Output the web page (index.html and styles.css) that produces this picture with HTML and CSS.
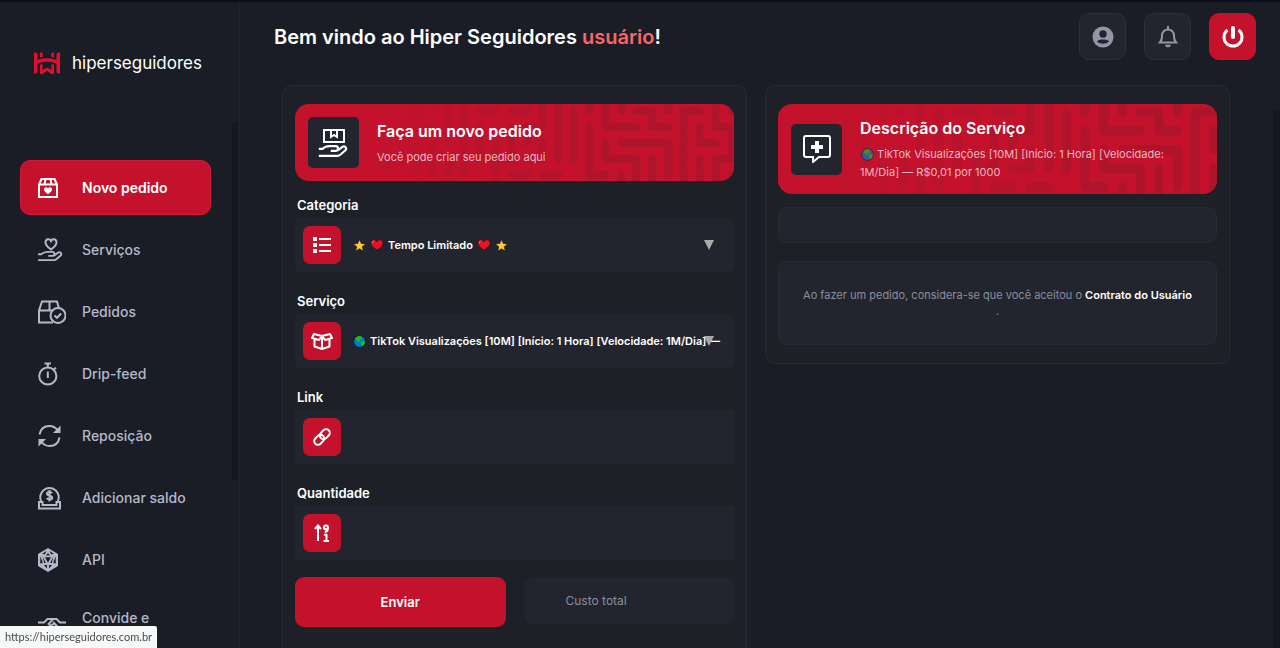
FILE: index.html
```
<!DOCTYPE html>
<html lang="pt-BR">
<head>
  <meta charset="UTF-8" />
  <meta name="viewport" content="width=device-width, initial-scale=1.0"/>
  <title>Hiper Seguidores - Novo pedido</title>
  <link rel="stylesheet" href="styles.css">
</head>
<body>
  <!-- shared shapes -->
  <svg class="defs" width="0" height="0" aria-hidden="true">
    <defs>
      <linearGradient id="fade" gradientUnits="userSpaceOnUse" x1="40" y1="0" x2="320" y2="0">
        <stop offset="0" stop-color="#a9152c" stop-opacity="0"/>
        <stop offset="1" stop-color="#a9152c" stop-opacity="0.85"/>
      </linearGradient>
      <symbol id="maze" viewBox="0 0 440 77" preserveAspectRatio="xMidYMid slice">
        <g fill="none" stroke="url(#fade)" stroke-width="8" stroke-linecap="round" stroke-linejoin="round">
          <path d="M91 7V71M107 23V55M122 -6V23H138M122 39V82M138 7V7.1M138 39V71M154 -6V39M154 55V82M170 7V71M185 7H201M185 23V55M201 39V82M217 7H233M217 23V55H201M233 39V23M217 71H233"/>
          <path d="M248 -6V23H233M248 39V55H233M248 71H264M264 -6V55M279 7V55M295 -6V7M295 23V71H311M295 71V71.1M311 -6V23H342M327 -6V7M342 7H358V23H374M374 -6V7M311 39V55H342V82M327 39H374V71M327 71V82M358 55V82"/>
          <path d="M389 82V7H405M405 23V39H421M405 55V82M421 -6V23H437V55M437 7V-6M452 7H437M437 39V55H421V82M452 71H437V82"/>
        </g>
      </symbol>
      <symbol id="star" viewBox="0 0 12 12">
        <path d="M6 .5l1.600 3.700 4 .3-3.100 2.700 1 3.900L6 9l-3.500 2.100 1-3.900L.4 4.500l4-.3z" fill="#ffc83d" stroke="#14151a" stroke-width=".5"/>
      </symbol>
      <symbol id="heart" viewBox="0 0 14 12">
        <path d="M7 11.300C3 8.300.8 6.300.8 3.900.8 2.100 2.100.8 3.800.8 5.100.8 6.300 1.500 7 2.700 7.700 1.500 8.900.8 10.200.8c1.700 0 3 1.300 3 3.100 0 2.400-2.200 4.400-6.200 7.400z" fill="#e81224" stroke="#14151a" stroke-width=".7"/>
        <path d="M2.200 3.800c.1-.9.700-1.500 1.500-1.600" fill="none" stroke="#f98c95" stroke-width=".9"/>
      </symbol>
      <symbol id="globe" viewBox="0 0 13 13">
        <circle cx="6.500" cy="6.500" r="5.900" fill="#0078d7" stroke="#14151a" stroke-width=".8"/>
        <path d="M2.500 3.200C4 1.600 5.600 1 7.600 1.300l1.400 1.300-1 1 .7 1.200-1.700.7-.7 1.400-1.800-.4L3.200 5zM7.600 7l2.400-1.200 1.900 1.500c-.2 1.700-1.200 3.100-2.500 4L8 9.500z" fill="#16c60c"/>
      </symbol>
      <symbol id="hand" viewBox="0 0 28 12">
        <path d="M0 3.500h3.500C5.500 1.500 7.500 1 10 1h5.500a2.200 2.200 0 0 1 0 4.400H11M17.500 5l4.300-3.300a2.100 2.100 0 0 1 2.700 3.200L19.800 9c-.8.700-1.600 1-2.600 1H0" fill="none" stroke="currentColor" stroke-width="2"/>
      </symbol>
    </defs>
  </svg>

  <div class="layout">
    <aside class="sidebar">
      <a class="logo" href="#">
        <svg width="26" height="22" viewBox="0 0 26 22" fill="#e00f31">
          <path d="M0 0l3.500 1.500v6.300C9.500 5.700 16.500 5.700 22.500 7.800V1.500L26 0v22l-3.500-1.500V11.800C16.500 9.200 9.500 9.200 3.500 11.800v8.700L0 22z"/>
          <path d="M6 0l2.800 1.500V4.800L6 5.400zM20 0l-2.800 1.500v3.300l2.800.6z"/>
          <path d="M6 12.800l2.600-.8v6l4.400-2.600 4.400 2.600v-6l2.600.8V22h-2.800L13 18.800 8.800 22H6z"/>
        </svg>
        <span>hiperseguidores</span>
      </a>
      <nav class="menu">
        <a class="menu-item active" href="#">
          <svg class="menu-icon" viewBox="0 0 28 24" fill="none" stroke="currentColor" stroke-width="2">
            <path d="M1 8.500V21h18V8.500L16.500 3h-13zM1 8.500h18M7.500 3L6.500 8.500M12.500 3l1 5.500"/>
            <path d="M10 18.200c-2.700-1.900-4-3.200-4-4.900 0-2.200 2.900-2.900 4-.9 1.100-2 4-1.300 4 .9 0 1.700-1.300 3-4 4.900z" fill="currentColor" stroke="none"/>
          </svg>
          <span>Novo pedido</span>
        </a>
        <a class="menu-item" href="#">
          <svg class="menu-icon" viewBox="0 0 28 24" fill="none" stroke="currentColor" stroke-width="2">
            <path d="M13 11.500C9 8.500 7.500 7 7.500 4.500 7.500 1 11.500 0 13 3c1.500-3 5.500-2 5.500 1.500 0 2.500-1.500 4-5.500 7z"/>
            <use href="#hand" x="0" y="13" width="26" height="11"/>
          </svg>
          <span>Serviços</span>
        </a>
        <a class="menu-item" href="#">
          <svg class="menu-icon" viewBox="0 0 28 24" fill="none" stroke="currentColor" stroke-width="2">
            <path d="M15 22.500H1v-12L4 1.500h15l2 7M1 10.500h13M11.500 1.500v9"/>
            <circle cx="20" cy="15.500" r="7.500"/>
            <path d="M16.500 15.500l2.500 2.300 4.200-4.300"/>
          </svg>
          <span>Pedidos</span>
        </a>
        <a class="menu-item" href="#">
          <svg class="menu-icon" viewBox="0 0 28 24" fill="none" stroke="currentColor" stroke-width="2">
            <circle cx="9.800" cy="14" r="8.600"/>
            <path d="M9.800 9.500V16M6.500 1.500H13M9.800 1.500V5M15.500 7.800L18 5.800" />
          </svg>
          <span>Drip-feed</span>
        </a>
        <a class="menu-item" href="#">
          <svg class="menu-icon" viewBox="0 0 28 24" fill="none" stroke="currentColor" stroke-width="2">
            <path d="M1.500 10.500C2.500 5 6.500 2 11.500 2c3.500 0 6 1.500 8 4M21.500 13.500c-1 5.500-5 8.500-10 8.500-3.500 0-6-1.500-8-4"/>
            <path d="M22.500 1.500V9H15zM.5 22.500V15H8z" fill="currentColor" stroke="none"/>
          </svg>
          <span>Reposição</span>
        </a>
        <a class="menu-item" href="#">
          <svg class="menu-icon" viewBox="0 0 28 24" fill="none" stroke="currentColor" stroke-width="2">
            <path d="M3.500 16A9.300 9.300 0 1 1 19.500 16M1 16h3.500v3h14v-3H22v6.500H1z"/>
            <path d="M14 7.300C13 5.500 9 5.600 9 7.800c0 2.500 5.200 1.300 5.200 3.900 0 2.200-4.200 2.300-5.400.3M11.500 4v11.500"/>
          </svg>
          <span>Adicionar saldo</span>
        </a>
        <a class="menu-item" href="#">
          <svg class="menu-icon" viewBox="0 0 28 24">
            <path d="M10 0l10 6v12l-10 6L0 18V6z" fill="currentColor"/>
            <path d="M8.500 3L4.200 5.700l2.600.8zM11.500 3l4.300 2.700-2.600.8zM10 5l-2 2.500h4zM2.300 8.300l2.500 6.500-2.500 1zM17.700 8.300l-2.500 6.500 2.500 1zM7 9.300h6l-3 5.500zM4.600 8.600l3.300 6.300-1.700.2zM15.400 8.600l-3.300 6.300 1.700.2zM6 17h3v3.500zM14 17h-3v3.500z" fill="#1a1d25"/>
          </svg>
          <span>API</span>
        </a>
        <a class="menu-item" href="#">
          <svg class="menu-icon" viewBox="0 0 28 24" fill="none" stroke="currentColor" stroke-width="2">
            <path d="M0 7.500h6L9.500 4h9L22 7.500h6M15 4.500l-4.500 4.500c1.500 2 4 1.500 5.500-1l6 6.500M0 17h5l6 4.500 3 .5 8-5h6"/>
          </svg>
          <span>Convide e ganhe</span>
        </a>
      </nav>
    </aside>

    <main class="content">
      <header class="topbar">
        <h1>Bem vindo ao Hiper Seguidores <span class="user">usuário</span>!</h1>
        <div class="actions">
          <button type="button" class="btn-icon" aria-label="Conta">
            <svg width="22" height="22" viewBox="0 0 22 22">
              <circle cx="11" cy="11" r="10.500" fill="#9396a8"/>
              <circle cx="11" cy="8" r="3.700" fill="#23252e"/>
              <path d="M5 15.500c1.500-2.600 10.500-2.600 12 0-2.800 3-9.200 3-12 0z" fill="#23252e"/>
            </svg>
          </button>
          <button type="button" class="btn-icon" aria-label="Notificações">
            <svg width="20" height="22" viewBox="0 0 20 22" fill="none" stroke="#9396a8" stroke-width="2">
              <path d="M10 0v3M2 16.500c1.500-1.500 2-3 2-7a6 6 0 0 1 12 0c0 4 .5 5.500 2 7zM1 16.500h18"/>
              <path d="M7 18.800h6c-.4 3.400-5.600 3.400-6 0z" fill="#9396a8" stroke="none"/>
            </svg>
          </button>
          <button type="button" class="btn-icon btn-power" aria-label="Sair">
            <svg width="22" height="22" viewBox="0 0 22 22" fill="none" stroke="#fff" stroke-width="3">
              <path d="M11 2v9" stroke-width="4" stroke-linecap="round"/>
              <path d="M5.500 4a9 9 0 1 0 11 0"/>
            </svg>
          </button>
        </div>
      </header>

      <div class="columns">
        <section class="card card-order">
          <div class="banner">
            <svg class="banner-maze" aria-hidden="true"><use href="#maze" width="100%" height="100%"/></svg>
            <div class="banner-icon">
              <svg width="32" height="30" viewBox="0 0 32 30" fill="none" stroke="#fff" stroke-width="2">
                <path d="M6 2h20v12H6zM13 2v7l3-2 3 2V2"/>
                <use href="#hand" x="0" y="17" width="32" height="13" color="#fff"/>
              </svg>
            </div>
            <div class="banner-text">
              <h2>Faça um novo pedido</h2>
              <p>Você pode criar seu pedido aqui</p>
            </div>
          </div>

          <form autocomplete="off">
            <div class="group">
              <label for="category">Categoria</label>
              <div class="field">
                <span class="field-icon">
                  <svg width="18" height="16" viewBox="0 0 18 16" fill="#fff">
                    <path d="M0 0h4v4H0zM0 6h4v4H0zM0 12h4v4H0zM6 1h12v2H6zM6 7h12v2H6zM6 13h12v2H6z"/>
                  </svg>
                </span>
                <svg width="13" height="13"><use href="#star"/></svg>
                <svg width="14" height="12"><use href="#heart"/></svg>
                <select id="category">
                  <option>Tempo Limitado</option>
                </select>
                <svg width="14" height="12"><use href="#heart"/></svg>
                <svg width="13" height="13"><use href="#star"/></svg>
                <svg class="arrow" width="10" height="10" viewBox="0 0 10 10"><path d="M0 0h10L5 10z" fill="#aaa"/></svg>
              </div>
            </div>
            <div class="group">
              <label for="service">Serviço</label>
              <div class="field">
                <span class="field-icon">
                  <svg width="22" height="18" viewBox="0 0 22 18" fill="none" stroke="#fff" stroke-width="2" stroke-linejoin="round">
                    <path d="M11 4L3 2 1 6l7 2 3-4 3 4 7-2-2-4zM3.500 7v7.500L11 17l7.500-2.500V7M11 4v13"/>
                  </svg>
                </span>
                <svg width="13" height="13"><use href="#globe"/></svg>
                <select id="service" class="grow">
                  <option>TikTok Visualizações [10M] [Início: 1 Hora] [Velocidade: 1M/Dia] — R$0,01 por 1000</option>
                </select>
                <svg class="arrow" width="10" height="10" viewBox="0 0 10 10"><path d="M0 0h10L5 10z" fill="#aaa"/></svg>
              </div>
            </div>
            <div class="group">
              <label for="link">Link</label>
              <div class="field square">
                <span class="field-icon">
                  <svg width="20" height="20" viewBox="0 0 20 20" fill="none" stroke="#fff" stroke-width="2">
                    <rect x="-5.500" y="-3.700" width="11" height="7.400" rx="3.700" transform="translate(12.800 7.200) rotate(-45)"/>
                    <rect x="-5.500" y="-3.700" width="11" height="7.400" rx="3.700" transform="translate(7.200 12.800) rotate(-45)"/>
                  </svg>
                </span>
                <input type="text" id="link">
              </div>
            </div>
            <div class="group">
              <label for="quantity">Quantidade</label>
              <div class="field square">
                <span class="field-icon">
                  <svg width="16" height="18" viewBox="0 0 16 18" fill="none" stroke="#fff" stroke-width="2">
                    <path d="M4 17V3M1 5l3-3.500L7 5"/>
                    <path d="M13.500 4v2.500L11 8.500M10 10.800h2.500V17M9.500 17H15"/>
                    <circle cx="12" cy="3.500" r="2"/>
                  </svg>
                </span>
                <input type="text" id="quantity">
              </div>
            </div>
            <div class="form-actions">
              <button type="submit" class="btn-send">Enviar</button>
              <input type="text" class="total" placeholder="Custo total" aria-label="Custo total" readonly>
            </div>
          </form>
        </section>

        <section class="card">
          <div class="banner">
            <svg class="banner-maze" aria-hidden="true"><use href="#maze" width="100%" height="100%"/></svg>
            <div class="banner-icon">
              <svg width="28" height="28" viewBox="0 0 28 28">
                <path d="M3 1h22a2 2 0 0 1 2 2v17a2 2 0 0 1-2 2h-9l-6 5v-5H3a2 2 0 0 1-2-2V3a2 2 0 0 1 2-2z" fill="none" stroke="#fff" stroke-width="2"/>
                <path d="M12 6h4v4h4v4h-4v4h-4v-4H8v-4h4z" fill="#fff"/>
              </svg>
            </div>
            <div class="banner-text">
              <h2>Descrição do Serviço</h2>
              <p><svg class="globe" width="13" height="13"><use href="#globe"/></svg> TikTok Visualizações [10M] [Início: 1 Hora] [Velocidade: 1M/Dia] — R$0,01 por 1000</p>
            </div>
          </div>
          <div class="box box-empty"></div>
          <div class="box box-terms">
            <p>Ao fazer um pedido, considera-se que você aceitou o <a href="#">Contrato do Usuário</a><br>.</p>
          </div>
        </section>
      </div>
    </main>
  </div>

  <div class="status-url">https://hiperseguidores.com.br</div>
</body>
</html>
```
FILE: styles.css
```
:root {
  --primary: #c4122d;
  --bg: #1a1d25;
  --card-bg: #1e2027;
  --field: #23252e;
  --border: #272a33;
  --text: #b4b9ca;
  --muted: #8a8e9b;
}
* {
  box-sizing: border-box;
}
body {
  margin: 0;
  background: var(--bg);
  color: #fff;
  font-family: Inter, "Liberation Sans", sans-serif;
  font-size: 12px;
  overflow: hidden;
}
h1, h2, p {
  margin: 0;
}
a {
  color: inherit;
  text-decoration: none;
}
button, input, select {
  font: inherit;
  color: inherit;
  border: none;
  outline: none;
  background: none;
}
svg {
  display: block;
  flex: none;
}
.defs {
  position: absolute;
}
.layout {
  display: flex;
  height: 100vh;
  border-top: 2px solid #0e0b1b;
}

/* sidebar */
.sidebar {
  position: relative;
  width: 240px;
  flex: none;
  overflow: hidden;
  border-right: 1px solid #20232c;
}
.sidebar::after {
  content: "";
  position: absolute;
  top: 120px;
  right: 1px;
  width: 6px;
  height: 358px;
  border-radius: 3px;
  background: #15171f;
}
.logo {
  display: flex;
  align-items: center;
  gap: 12px;
  margin: 49px 0 0 34px;
  height: 24px;
  font-size: 17px;
}
.menu {
  display: flex;
  flex-direction: column;
  gap: 7px;
  padding: 85px 28px 0 20px;
}
.menu-item {
  display: flex;
  align-items: center;
  gap: 16px;
  min-height: 55px;
  padding: 15px 18px;
  border-radius: 10px;
  font-size: 14px;
  line-height: 18px;
  font-weight: 500;
  color: var(--text);
}
.menu-item.active {
  background: var(--primary);
  border: 1px solid #d11a37;
  padding: 14px 17px;
  color: #fff;
  font-weight: 600;
}
.menu-icon {
  width: 28px;
  height: 24px;
}

/* content */
.content {
  flex: 1;
  min-width: 0;
  overflow-y: auto;
  scrollbar-width: none;
}
.content::after {
  content: "";
  position: absolute;
  top: 110px;
  right: 0;
  bottom: 0;
  width: 7px;
  border-radius: 4px 4px 0 0;
  background: #15171f;
}
.topbar {
  display: flex;
  justify-content: space-between;
  padding: 11px 24px 0 34px;
}
.topbar h1 {
  font-size: 20px;
  font-weight: 600;
  line-height: 48px;
}
.user {
  color: #ff6467;
}
.actions {
  display: flex;
  gap: 18px;
}
.btn-icon {
  display: flex;
  align-items: center;
  justify-content: center;
  width: 47px;
  height: 47px;
  padding: 0;
  border: 1px solid #2d303a;
  border-radius: 10px;
  background: var(--field);
  cursor: pointer;
}
.btn-power {
  background: var(--primary);
  border-color: var(--primary);
}
.columns {
  display: grid;
  grid-template-columns: 1fr 1fr;
  align-items: start;
  gap: 18px;
  padding: 24px 50px 0 42px;
}
.card {
  min-width: 0;
  padding: 18px 12px;
  border: 1px solid var(--border);
  border-radius: 10px;
  background: var(--card-bg);
}
.card-order {
  padding-bottom: 40px;
}

/* banner */
.banner {
  position: relative;
  display: flex;
  align-items: center;
  gap: 18px;
  padding: 13px;
  border-radius: 14px;
  background: var(--primary);
  overflow: hidden;
}
.banner-maze {
  position: absolute;
  top: 0;
  left: 0;
  width: 100%;
  height: 100%;
}
.banner-icon {
  position: relative;
  display: flex;
  align-items: center;
  justify-content: center;
  flex: none;
  width: 51px;
  height: 51px;
  border-radius: 5px;
  background: var(--field);
}
.banner-text {
  position: relative;
}
.banner-text h2 {
  font-size: 16px;
  font-weight: 600;
  line-height: 22px;
}
.banner-text p {
  margin-top: 6px;
  font-size: 11px;
  line-height: 18px;
  color: #f0b7c0;
}
.globe {
  display: inline-block;
  margin-left: 1px;
  vertical-align: -3px;
  opacity: .7;
}

/* form */
form {
  display: flex;
  flex-direction: column;
  gap: 17px;
  margin-top: 12px;
}
.group label {
  display: block;
  margin-left: 2px;
  font-size: 13px;
  font-weight: 600;
  line-height: 25px;
}
.field {
  position: relative;
  display: flex;
  align-items: center;
  gap: 4px;
  height: 54px;
  padding: 0 12px 0 8px;
  border-radius: 6px;
  background: var(--field);
}
.field.square {
  border-radius: 0;
}
.field-icon {
  display: flex;
  align-items: center;
  justify-content: center;
  flex: none;
  width: 38px;
  height: 38px;
  margin-right: 8px;
  border-radius: 7px;
  background: var(--primary);
}
.field select {
  appearance: none;
  min-width: 0;
  padding: 0;
  font-size: 11px;
  font-weight: 600;
  line-height: 20px;
}
.field input {
  flex: 1;
  min-width: 0;
  height: 100%;
}
.field .grow {
  flex: 1;
}
.arrow {
  position: absolute;
  right: 20px;
  top: 22px;
  pointer-events: none;
}
.form-actions {
  display: grid;
  grid-template-columns: 1fr 1fr;
  align-items: start;
  gap: 18px;
}
.btn-send {
  height: 50px;
  border-radius: 9px;
  background: var(--primary);
  font-size: 13px;
  font-weight: 600;
  cursor: pointer;
}
.total {
  min-width: 0;
  height: 47px;
  padding: 0 42px;
  border-radius: 9px;
  background: var(--field);
}
.total::placeholder {
  color: var(--muted);
}

/* service description */
.box {
  border: 1px solid var(--border);
  border-radius: 9px;
  background: var(--field);
}
.box-empty {
  height: 36px;
  margin-top: 13px;
}
.box-terms {
  margin-top: 18px;
  padding: 25px 18px;
  text-align: center;
  font-size: 11px;
  line-height: 16px;
  color: var(--muted);
}
.box-terms a {
  color: #fff;
  font-weight: 600;
}

.status-url {
  position: fixed;
  left: 0;
  bottom: 0;
  padding: 0 5px;
  border-radius: 0 2px 0 0;
  background: rgba(255, 255, 255, .97);
  color: #4a4a4a;
  font: 11px/22px Lato, sans-serif;
}
```
